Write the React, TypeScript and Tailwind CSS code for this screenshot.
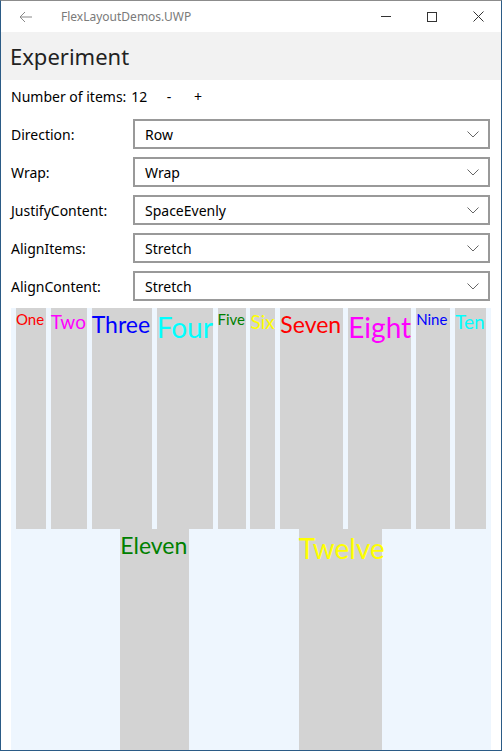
import React from "react";

type Item = { text: string; width: number; size: string; color: string };

// item widths come from the reference (each box is as wide as its label)
const items: Item[] = [
  { text: "One", width: 30, size: "text-[15px]", color: "text-[#ff0000]" },
  { text: "Two", width: 36, size: "text-[19px]", color: "text-[#ff00ff]" },
  { text: "Three", width: 60, size: "text-[23px]", color: "text-[#0000ff]" },
  { text: "Four", width: 56, size: "text-[28px]", color: "text-[#00ffff]" },
  { text: "Five", width: 28, size: "text-[15px]", color: "text-[#008000]" },
  { text: "Six", width: 25, size: "text-[19px]", color: "text-[#ffff00]" },
  { text: "Seven", width: 63, size: "text-[23px]", color: "text-[#ff0000]" },
  { text: "Eight", width: 63, size: "text-[28px]", color: "text-[#ff00ff]" },
  { text: "Nine", width: 34, size: "text-[15px]", color: "text-[#0000ff]" },
  { text: "Ten", width: 31, size: "text-[19px]", color: "text-[#00ffff]" },
  { text: "Eleven", width: 69, size: "text-[23px]", color: "text-[#008000]" },
  { text: "Twelve", width: 83, size: "text-[28px]", color: "text-[#ffff00]" },
];

const pickers = [
  { label: "Direction:", value: "Row" },
  { label: "Wrap:", value: "Wrap" },
  { label: "JustifyContent:", value: "SpaceEvenly" },
  { label: "AlignItems:", value: "Stretch" },
  { label: "AlignContent:", value: "Stretch" },
];

const Chevron = () => (
  <svg width="12" height="7" viewBox="0 0 12 7" className="text-[#666]">
    <path d="M0.5 0.5 L6 6 L11.5 0.5" fill="none" stroke="currentColor" strokeWidth="1" />
  </svg>
);

const App = () => {
  return (
    <div className="w-[502px] h-[751px] flex flex-col bg-white border border-[#2b5b86] border-t-[#8c8c8c] font-['Segoe_UI','Noto_Sans',sans-serif] overflow-hidden">
      {/* Title bar */}
      <div className="h-[31px] flex items-center shrink-0">
        <svg width="14" height="12" viewBox="0 0 14 12" className="ml-[18px] text-[#888]">
          <path d="M13 6 H1 M6 1 L1 6 L6 11" fill="none" stroke="currentColor" strokeWidth="1" />
        </svg>
        <span className="ml-[28px] text-[12px] text-[#7a7a7a]">FlexLayoutDemos.UWP</span>
        <div className="ml-auto flex items-center">
          <div className="w-[46px] h-[31px] flex items-center justify-center">
            <div className="w-[10px] h-px bg-[#333]" />
          </div>
          <div className="w-[46px] h-[31px] flex items-center justify-center">
            <div className="w-[10px] h-[10px] border border-[#333]" />
          </div>
          <div className="w-[46px] h-[31px] flex items-center justify-center">
            <svg width="11" height="11" viewBox="0 0 11 11" className="text-[#333]">
              <path d="M0.5 0.5 L10.5 10.5 M10.5 0.5 L0.5 10.5" fill="none" stroke="currentColor" strokeWidth="1" />
            </svg>
          </div>
        </div>
      </div>

      {/* Page header */}
      <div className="h-[48px] bg-[#f2f2f2] flex items-center px-[9px] shrink-0">
        <span className="text-[22px] text-[#222]">Experiment</span>
      </div>

      {/* Controls */}
      <div className="flex-1 flex flex-col px-[10px] min-h-0">
        <div className="h-[33px] flex items-center text-[14px] text-black shrink-0">
          <span className="w-[143px]">
            Number of items:<span className="ml-[5px]">12</span>
          </span>
          <span className="w-[30px] text-center">-</span>
          <span className="w-[28px] text-center">+</span>
        </div>

        <div className="mt-[6px] flex flex-col gap-[8px] shrink-0">
          {pickers.map((p) => (
            <div key={p.label} className="h-[30px] flex items-center">
              <span className="w-[122px] text-[14px] text-black">{p.label}</span>
              <div className="flex-1 h-[30px] border-2 border-[#999] flex items-center pl-[10px] pr-[9px] mr-px">
                <span className="text-[14px] text-black">{p.value}</span>
                <div className="ml-auto flex items-center">
                  <Chevron />
                </div>
              </div>
            </div>
          ))}
        </div>

        {/* Flex playground */}
        <div className="mt-[7px] flex-1 bg-[#eef6fe] flex flex-wrap justify-evenly content-stretch items-stretch">
          {items.map((it) => (
            <div
              key={it.text}
              className="bg-[#d3d3d3] shrink-0"
              style={{ width: it.width }}
            >
              <div className={`font-['Lato',sans-serif] whitespace-nowrap leading-[1.25] pt-[2px] ${it.size} ${it.color}`}>
                {it.text}
              </div>
            </div>
          ))}
        </div>
      </div>
    </div>
  );
};

export default App;
